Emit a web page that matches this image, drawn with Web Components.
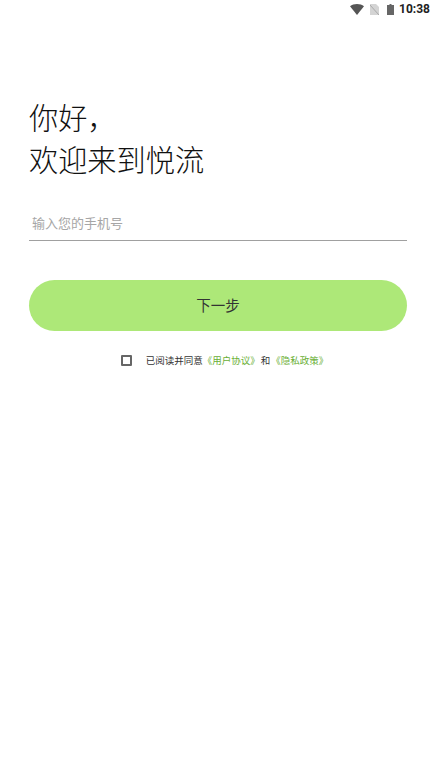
<!DOCTYPE html>
<html lang="zh-CN">
<head>
<meta charset="utf-8">
<style>
  html, body { margin: 0; padding: 0; background: #fff; }
  body { width: 436px; height: 776px; overflow: hidden; font-family: "Noto Sans CJK SC", "Noto Sans", sans-serif; }
</style>
</head>
<body>
<status-bar></status-bar>
<login-page>
  <span slot="line1">你好，</span>
  <span slot="line2">欢迎来到悦流</span>
</login-page>
<script>
class StatusBar extends HTMLElement {
	constructor() {
		super();
		this.shadow = this.attachShadow({ mode: "open" });
		this.shadow.innerHTML = `
      <style>
        :host { display: flex; height: 19px; align-items: center; justify-content: flex-end; padding-right: 6px; }
        svg { display: block; }
        .sim { margin-left: 6px; }
        .bat { margin-left: 8px; }
        .time { font: 700 12px Roboto, "Liberation Sans", sans-serif; color: #222; line-height: 19px; margin-left: 5px; }
      </style>
      <svg width="14" height="11" viewBox="0 0 14 11"><path d="M0 2.200C1.900.7 4.300 0 7 0s5.100.7 7 2.200L7 11z" fill="#555"/></svg>
      <svg class="sim" width="9" height="11" viewBox="0 0 9 11"><path d="M0 0h6l3 3v8H0z" fill="#d4d4d4"/><path d="M0 1l9 10" stroke="#aaa" stroke-width="1"/></svg>
      <svg class="bat" width="7" height="11" viewBox="0 0 7 11"><path d="M2.500 0h2v1H7v10H0V1h2.500z" fill="#666"/></svg>
      <span class="time">10:38</span>
    `;
	}
}
customElements.define("status-bar", StatusBar);

class PhoneInput extends HTMLElement {
	constructor() {
		super();
		this.shadow = this.attachShadow({ mode: "open" });
		this.shadow.innerHTML = `
      <style>
        :host { display: block; border-bottom: 1px solid #a0a0a0; height: 29px; box-sizing: content-box; }
        .ph { display: block; padding-left: 3px; font-size: 13px; line-height: 24px; color: #a6a6a6; }
      </style>
      <span class="ph">输入您的手机号</span>
    `;
	}
}
customElements.define("phone-input", PhoneInput);

class NextButton extends HTMLElement {
	constructor() {
		super();
		this.shadow = this.attachShadow({ mode: "open" });
		this.shadow.innerHTML = `
      <style>
        :host { display: flex; box-sizing: border-box; height: 51px; padding-bottom: 2px; border-radius: 26px; background: #ade878; align-items: center; justify-content: center; font-size: 14.500px; color: #333; }
      </style>
      <slot></slot>
    `;
	}
}
customElements.define("next-button", NextButton);

class AgreeRow extends HTMLElement {
	constructor() {
		super();
		this.shadow = this.attachShadow({ mode: "open" });
		this.shadow.innerHTML = `
      <style>
        :host { display: flex; align-items: center; justify-content: center; font-size: 9.500px; color: #333; height: 20px; padding-left: 13px; }
        .box { width: 7px; height: 7px; border: 2px solid #666; border-radius: 1px; margin-right: 14px; }
        a { color: #6aaf35; text-decoration: none; }
        .and { margin: 0 1px; }
      </style>
      <span class="box"></span>
      <span>已阅读并同意</span><a>《用户协议》</a><span class="and">和</span><a>《隐私政策》</a>
    `;
	}
}
customElements.define("agree-row", AgreeRow);

class LoginPage extends HTMLElement {
	constructor() {
		super();
		this.shadow = this.attachShadow({ mode: "open" });
		this.shadow.innerHTML = `
      <style>
        :host { display: block; padding: 76px 29px 0; }
        .title { font-size: 29.200px; line-height: 42px; color: #111; font-weight: 300; }
        .title slot { display: block; }
        phone-input { margin-top: 32px; }
        next-button { margin-top: 39px; }
        agree-row { margin-top: 19px; }
      </style>
      <div class="title"><slot name="line1"></slot><slot name="line2"></slot></div>
      <phone-input></phone-input>
      <next-button>下一步</next-button>
      <agree-row></agree-row>
    `;
	}
}
customElements.define("login-page", LoginPage);
</script>
</body>
</html>
